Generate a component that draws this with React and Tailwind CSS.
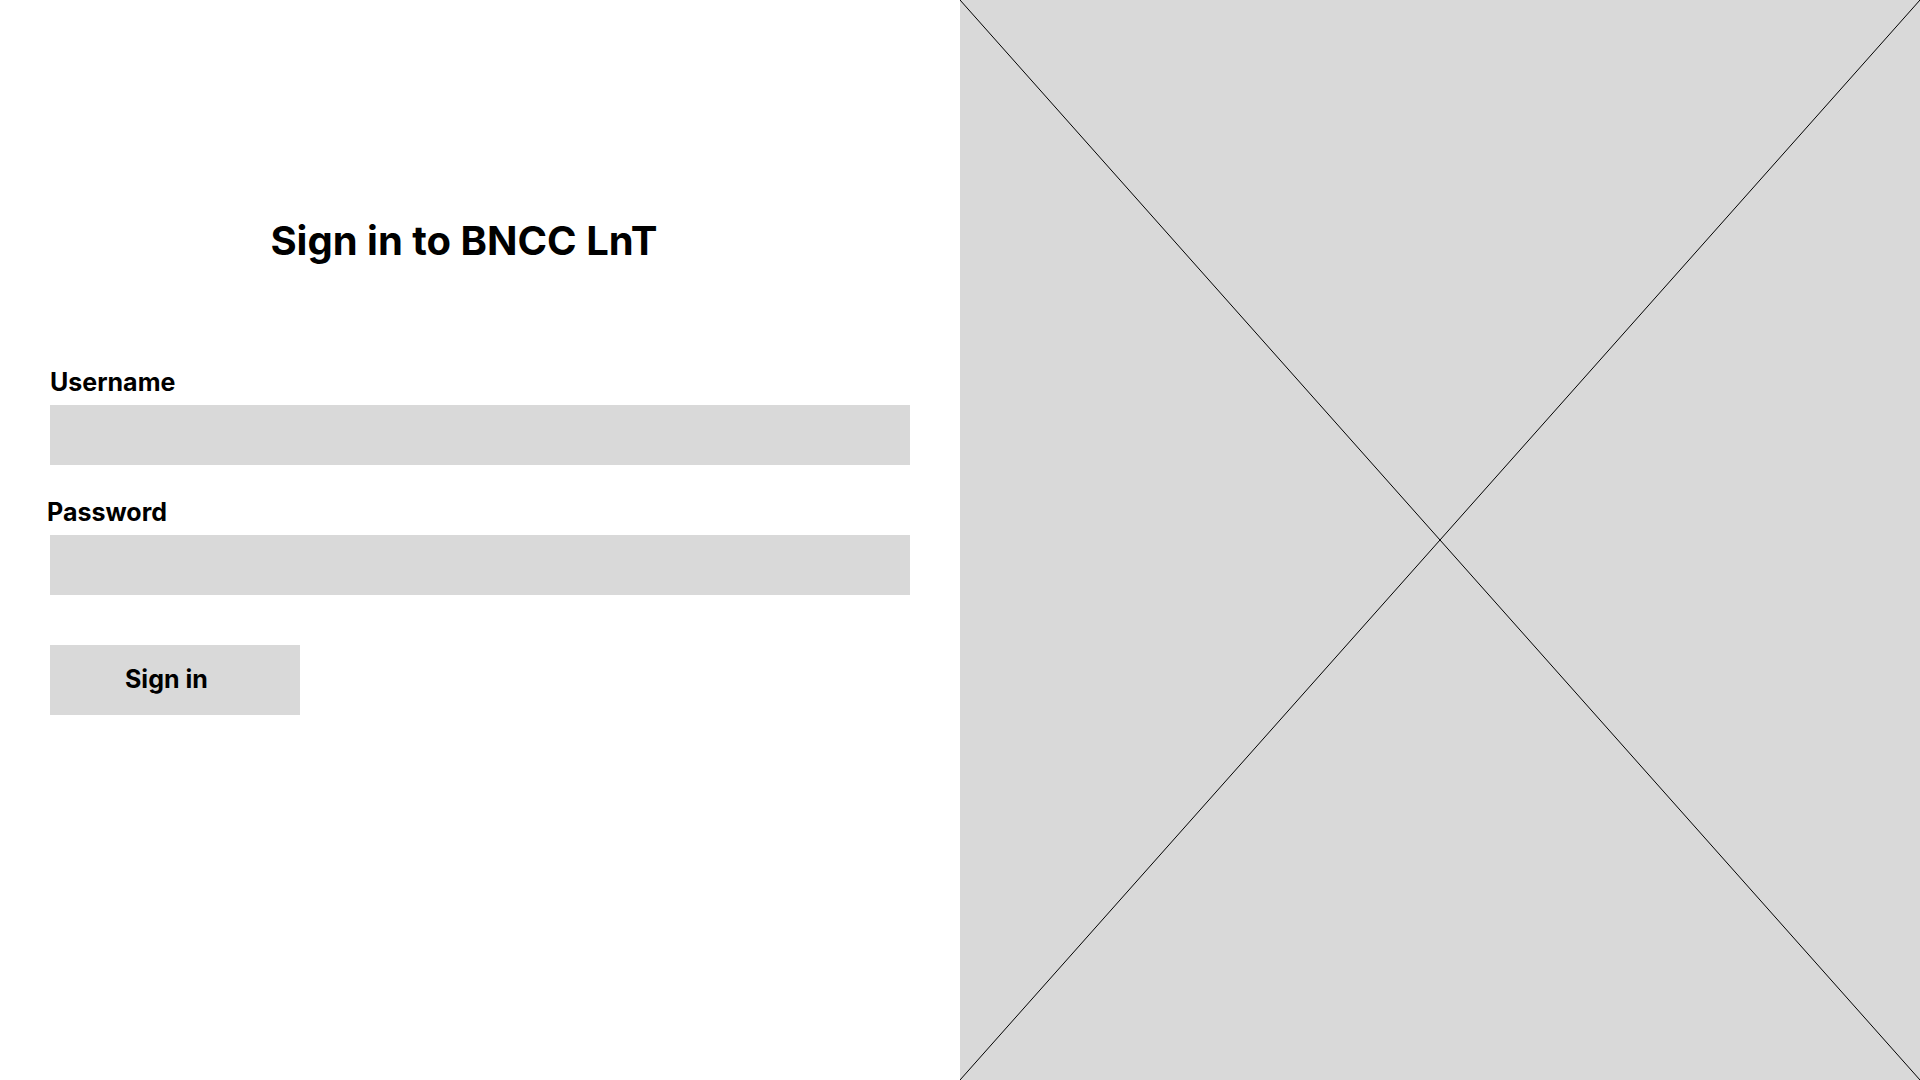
export default function App() {
    return (
        <div className="flex w-[1920px] h-[1080px] bg-white font-['Inter','Liberation_Sans',sans-serif] text-black">
            {/* left: form */}
            <div className="w-[960px] h-full flex flex-col pt-[217px]">
                <h1 className="text-center pr-[32px] text-[40px] leading-[48px] font-bold">Sign in to BNCC LnT</h1>

                <form className="flex flex-col mt-[102px]" onSubmit={(e) => e.preventDefault()}>
                    <label className="ml-[50px] text-[25px] leading-[30px] font-bold">Username</label>
                    <input type="text" className="mt-[8px] ml-[50px] w-[860px] h-[60px] bg-[#d9d9d9] outline-none px-4 text-[20px]" />

                    <label className="mt-[32px] ml-[47px] text-[25px] leading-[30px] font-bold">Password</label>
                    <input type="password" className="mt-[8px] ml-[50px] w-[860px] h-[60px] bg-[#d9d9d9] outline-none px-4 text-[20px]" />

                    <button type="submit" className="mt-[50px] ml-[50px] w-[250px] h-[70px] bg-[#d9d9d9] text-left pl-[75px] text-[25px] font-bold">
                        Sign in
                    </button>
                </form>
            </div>

            {/* right: image placeholder */}
            <div className="w-[960px] h-full bg-[#d9d9d9]">
                <svg width="960" height="1080" viewBox="0 0 960 1080" className="block">
                    <line x1="0" y1="0" x2="960" y2="1080" stroke="#000" strokeWidth="1" />
                    <line x1="960" y1="0" x2="0" y2="1080" stroke="#000" strokeWidth="1" />
                </svg>
            </div>
        </div>
    );
}
